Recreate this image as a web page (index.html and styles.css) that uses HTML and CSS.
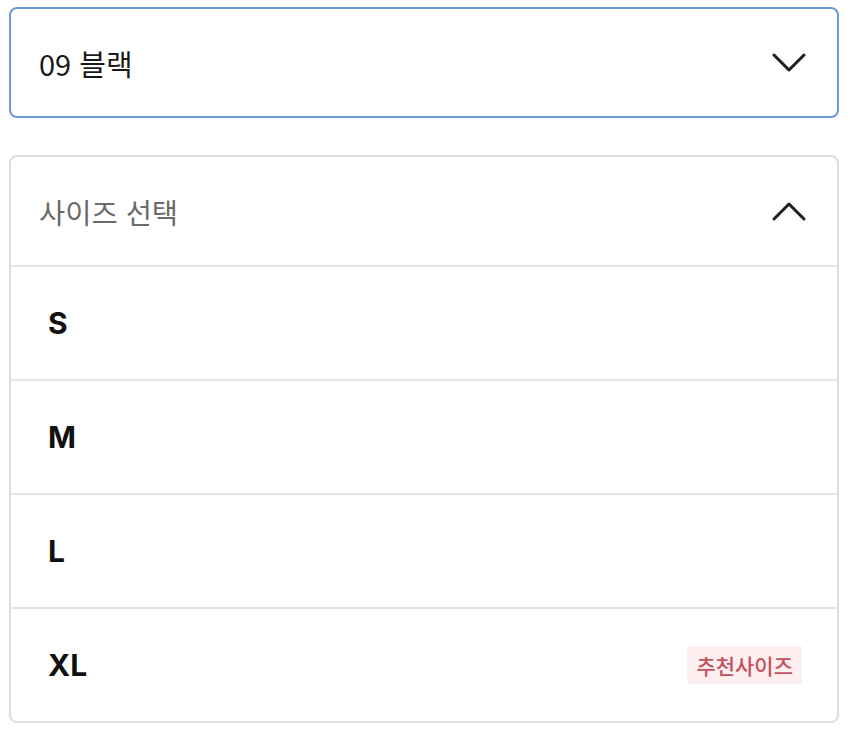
FILE: index.html
```html
<!DOCTYPE html>
<html lang="ko">
<head>
    <meta charset="UTF-8">
    <meta name="viewport" content="width=device-width, initial-scale=1.0">
    <title>옵션 선택</title>
    <link rel="stylesheet" href="styles.css">
</head>
<body>

<div class="options">
    <div class="select">
        <span class="select-value">09 블랙</span>
        <svg class="chevron" width="34" height="19" viewBox="0 0 34 19">
            <polyline points="2,2 17,17 32,2" />
        </svg>
    </div>

    <div class="size-panel">
        <div class="size-header">
            <span class="size-title">사이즈 선택</span>
            <svg class="chevron" width="34" height="19" viewBox="0 0 34 19">
                <polyline points="2,17 17,2 32,17" />
            </svg>
        </div>
        <div class="size-row">S</div>
        <div class="size-row">M</div>
        <div class="size-row">L</div>
        <div class="size-row">
            XL
            <span class="badge">추천사이즈</span>
        </div>
    </div>
</div>

</body>
</html>
```

FILE: styles.css
```css
* {
    box-sizing: border-box;
    margin: 0;
    padding: 0;
}

body {
    font-family: 'Noto Sans CJK KR', 'Noto Sans', sans-serif;
    background-color: #fff;
    color: #111;
}

.options {
    width: 830px;
    margin: 7px 0 0 9px;
    display: flex;
    flex-direction: column;
    gap: 37px;
}

.select {
    height: 111px;
    border: 2px solid #6c98d3;
    border-radius: 8px;
    display: flex;
    align-items: center;
    justify-content: space-between;
    padding: 0 31px 0 28px;
}

.select-value {
    font-size: 29px;
    color: #1a1a1a;
}

.chevron polyline {
    fill: none;
    stroke: #1e1e1e;
    stroke-width: 3;
    stroke-linecap: round;
    stroke-linejoin: round;
}

.size-panel {
    border: 2px solid #dedede;
    border-radius: 8px;
}

.size-header {
    height: 110px;
    display: flex;
    align-items: center;
    justify-content: space-between;
    padding: 0 31px 0 28px;
    border-bottom: 2px solid #e4e4e4;
}

.size-title {
    font-size: 28.5px;
    color: #6b6b6b;
}

.size-row {
    height: 114px;
    display: flex;
    align-items: center;
    justify-content: space-between;
    padding: 0 35px 0 37px;
    border-bottom: 2px solid #e4e4e4;
    font-family: 'Inter', 'Roboto', sans-serif;
    font-weight: 700;
    font-size: 30px;
    color: #111;
}

.size-row:last-child {
    border-bottom: none;
    height: 112px;
}

.badge {
    font-family: 'Noto Sans CJK KR', sans-serif;
    font-weight: 500;
    font-size: 21px;
    color: #c6505b;
    background-color: #fdeff0;
    padding: 4px 9px;
    border-radius: 2px;
}
```
